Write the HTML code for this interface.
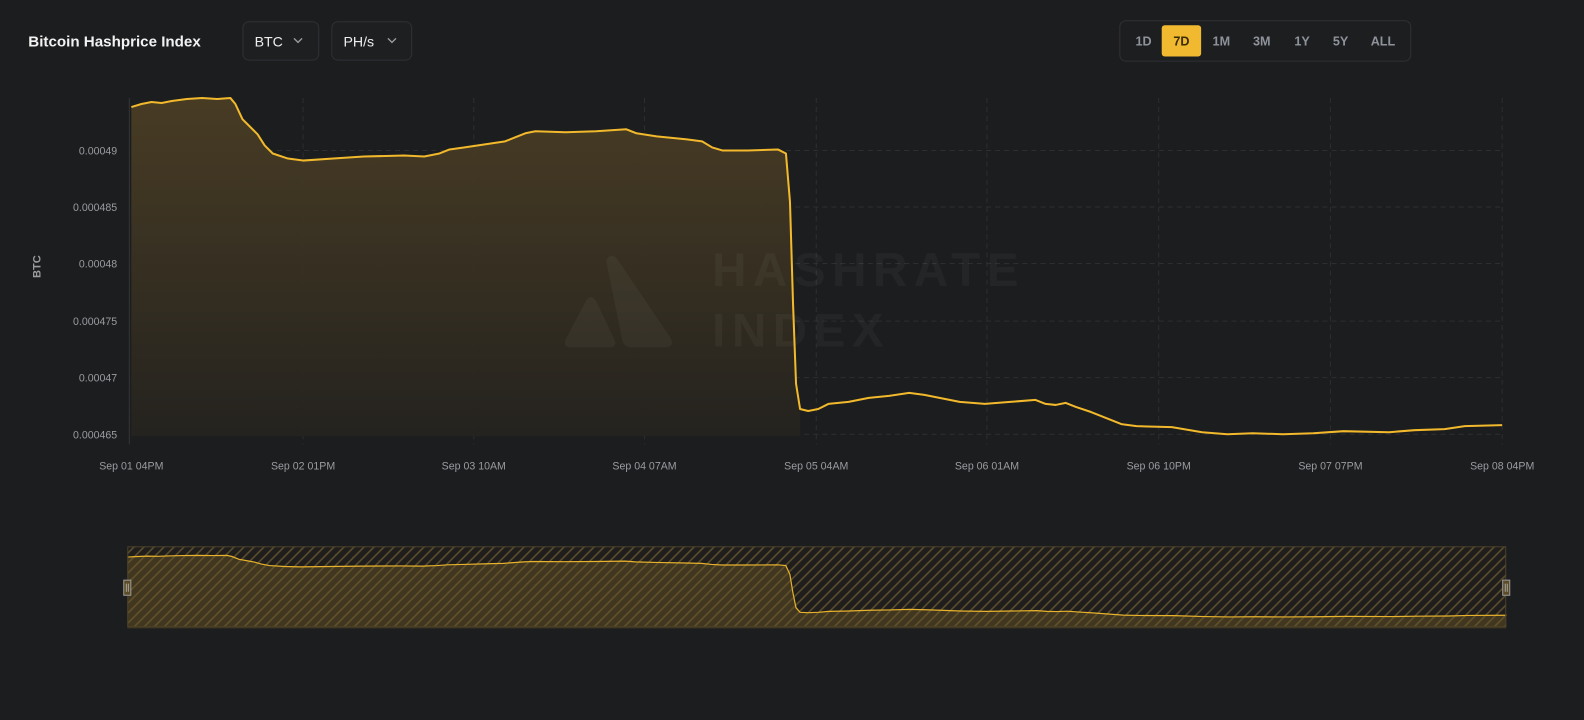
<!DOCTYPE html>
<html><head><meta charset="utf-8"><style>
html,body{margin:0;padding:0;background:#1c1d1f;overflow:hidden}
svg{display:block}
text{font-family:"Liberation Sans",sans-serif}
</style></head><body>
<svg width="1584" height="720" viewBox="0 0 1568 713" preserveAspectRatio="none" xmlns="http://www.w3.org/2000/svg">
<defs>
<linearGradient id="g" x1="0" y1="0" x2="0" y2="1">
<stop offset="0" stop-color="#4a3d24"/><stop offset="1" stop-color="#25231f"/>
</linearGradient>
<pattern id="h" width="7" height="7" patternUnits="userSpaceOnUse" patternTransform="rotate(45)">
<rect width="7" height="7" fill="#1f1e1c"/><rect width="1.6" height="7" fill="#5a4d2e"/>
</pattern>
</defs>
<rect width="1568" height="713" fill="#1c1d1f"/>
<!-- header -->
<text x="28" y="46" font-size="15" font-weight="bold" fill="#f2f2f2">Bitcoin Hashprice Index</text>
<rect x="240.5" y="21.5" width="75" height="38" rx="6" fill="#1e1f21" stroke="#303134"/>
<text x="252" y="46" font-size="14" fill="#eee">BTC</text>
<path d="M291,38 l4,4 l4,-4" stroke="#999" stroke-width="1.4" fill="none"/>
<rect x="328.5" y="21.5" width="79" height="38" rx="6" fill="#1e1f21" stroke="#303134"/>
<text x="340" y="46" font-size="14" fill="#eee">PH/s</text>
<path d="M384,38 l4,4 l4,-4" stroke="#999" stroke-width="1.4" fill="none"/>
<rect x="1108.5" y="20.5" width="288" height="40" rx="6" fill="#1d1e20" stroke="#303134"/>
<rect x="1150" y="25" width="39" height="31" rx="3" fill="#f0b92f"/>
<g font-size="12.5" font-weight="bold" fill="#8e929a" text-anchor="middle">
<text x="1132" y="45">1D</text><text x="1169.5" y="45" fill="#3a2c05">7D</text><text x="1209" y="45">1M</text><text x="1249" y="45">3M</text><text x="1289" y="45">1Y</text><text x="1327" y="45">5Y</text><text x="1369" y="45">ALL</text>
</g>
<!-- grid -->
<g stroke="#2c2e31" stroke-width="1" stroke-dasharray="5,4">
<line x1="130" y1="149" x2="1487" y2="149"/><line x1="130" y1="205" x2="1487" y2="205"/><line x1="130" y1="261" x2="1487" y2="261"/><line x1="130" y1="318" x2="1487" y2="318"/><line x1="130" y1="374" x2="1487" y2="374"/><line x1="130" y1="430" x2="1487" y2="430"/>
<line x1="300" y1="97" x2="300" y2="440"/><line x1="469" y1="97" x2="469" y2="440"/><line x1="638" y1="97" x2="638" y2="440"/><line x1="808" y1="97" x2="808" y2="440"/><line x1="977" y1="97" x2="977" y2="440"/><line x1="1147" y1="97" x2="1147" y2="440"/><line x1="1317" y1="97" x2="1317" y2="440"/><line x1="1487" y1="97" x2="1487" y2="440"/>
</g>
<line x1="128" y1="97" x2="128" y2="440" stroke="#333437"/>
<!-- fill -->
<path d="M130,106 L140,103 150,101 160,102 170,100 185,98 200,97 215,98 228,97 233,103 240,118 248,126 255,133 262,144 270,152 285,157 300,159 330,157 360,155 400,154 420,155 435,152 445,148 460,146 480,143 500,140 510,136 520,132 530,130 560,131 590,130 620,128 630,132 650,135 680,138 695,140 705,146 715,149 740,149 770,148 778,152 782,200 785,300 788,380 792,405 L792,432 L130,432 Z" fill="url(#g)" opacity="0.95"/>
<!-- watermark -->
<g fill="#ffffff" opacity="0.035">
<path d="M600,258 Q605,248 612,258 L664,335 Q668,344 658,344 L625,344 Q618,344 616,337 Z"/>
<path d="M580,298 Q585,290 590,298 L609,338 Q610,344 604,344 L565,344 Q557,344 560,336 Z"/>
<text x="705" y="283" font-size="47" font-weight="bold" letter-spacing="6.5">HASHRATE</text>
<text x="705" y="343" font-size="47" font-weight="bold" letter-spacing="6.5">INDEX</text>
</g>
<path d="M130,106 L140,103 150,101 160,102 170,100 185,98 200,97 215,98 228,97 233,103 240,118 248,126 255,133 262,144 270,152 285,157 300,159 330,157 360,155 400,154 420,155 435,152 445,148 460,146 480,143 500,140 510,136 520,132 530,130 560,131 590,130 620,128 630,132 650,135 680,138 695,140 705,146 715,149 740,149 770,148 778,152 782,200 785,300 788,380 792,405 800,407 810,405 820,400 840,398 860,394 880,392 900,389 915,391 930,394 950,398 975,400 1000,398 1025,396 1035,400 1045,401 1055,399 1065,403 1080,408 1095,414 1110,420 1125,422 1160,423 1190,428 1215,430 1240,429 1270,430 1300,429 1330,427 1375,428 1400,426 1430,425 1450,422 1487,421" fill="none" stroke="#f2b92c" stroke-width="2" stroke-linejoin="round"/>
<!-- y labels -->
<g font-size="10.5" fill="#9a9ca0" text-anchor="end">
<text x="116" y="153">0.00049</text><text x="116" y="209">0.000485</text><text x="116" y="265">0.00048</text><text x="116" y="322">0.000475</text><text x="116" y="378">0.00047</text><text x="116" y="434">0.000465</text>
</g>
<text transform="translate(40,264) rotate(-90)" font-size="11" font-weight="bold" fill="#9a9ca0" text-anchor="middle">BTC</text>
<g font-size="10.5" fill="#9a9ca0" text-anchor="middle">
<text x="130" y="465">Sep 01 04PM</text><text x="300" y="465">Sep 02 01PM</text><text x="469" y="465">Sep 03 10AM</text><text x="638" y="465">Sep 04 07AM</text><text x="808" y="465">Sep 05 04AM</text><text x="977" y="465">Sep 06 01AM</text><text x="1147" y="465">Sep 06 10PM</text><text x="1317" y="465">Sep 07 07PM</text><text x="1487" y="465">Sep 08 04PM</text>
</g>
<!-- navigator -->
<rect x="126" y="541" width="1365" height="80" fill="url(#h)"/>
<g transform="translate(126,550) scale(1.006,0.183) translate(-130,-97)">
<path d="M130,106 L140,103 150,101 160,102 170,100 185,98 200,97 215,98 228,97 233,103 240,118 248,126 255,133 262,144 270,152 285,157 300,159 330,157 360,155 400,154 420,155 435,152 445,148 460,146 480,143 500,140 510,136 520,132 530,130 560,131 590,130 620,128 630,132 650,135 680,138 695,140 705,146 715,149 740,149 770,148 778,152 782,200 785,300 788,380 792,405 800,407 810,405 820,400 840,398 860,394 880,392 900,389 915,391 930,394 950,398 975,400 1000,398 1025,396 1035,400 1045,401 1055,399 1065,403 1080,408 1095,414 1110,420 1125,422 1160,423 1190,428 1215,430 1240,429 1270,430 1300,429 1330,427 1375,428 1400,426 1430,425 1450,422 1487,421 L1487,492 L130,492 Z" fill="#6a5626" opacity="0.45"/>
<path d="M130,106 L140,103 150,101 160,102 170,100 185,98 200,97 215,98 228,97 233,103 240,118 248,126 255,133 262,144 270,152 285,157 300,159 330,157 360,155 400,154 420,155 435,152 445,148 460,146 480,143 500,140 510,136 520,132 530,130 560,131 590,130 620,128 630,132 650,135 680,138 695,140 705,146 715,149 740,149 770,148 778,152 782,200 785,300 788,380 792,405 800,407 810,405 820,400 840,398 860,394 880,392 900,389 915,391 930,394 950,398 975,400 1000,398 1025,396 1035,400 1045,401 1055,399 1065,403 1080,408 1095,414 1110,420 1125,422 1160,423 1190,428 1215,430 1240,429 1270,430 1300,429 1330,427 1375,428 1400,426 1430,425 1450,422 1487,421" fill="none" stroke="#e8b22c" stroke-width="1.2" vector-effect="non-scaling-stroke"/>
</g>
<rect x="126.5" y="541.5" width="1364" height="79" fill="none" stroke="#4a412a"/>
<rect x="122.5" y="574.5" width="7" height="15" fill="#5c4d28" stroke="#9a9a9a"/>
<path d="M125,578v8M127,578v8" stroke="#bbb" stroke-width="0.8"/>
<rect x="1487.5" y="574.5" width="7" height="15" fill="#5c4d28" stroke="#9a9a9a"/>
<path d="M1490,578v8M1492,578v8" stroke="#bbb" stroke-width="0.8"/>
</svg>
</body></html>
